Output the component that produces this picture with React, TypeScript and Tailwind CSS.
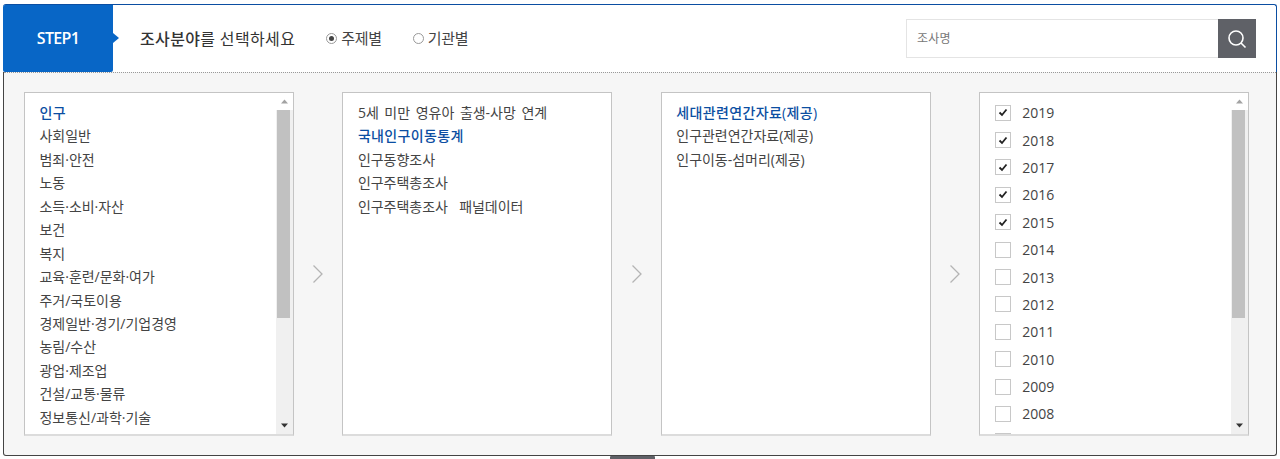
// App.tsx
const FONT = { fontFamily: '"Open Sans", "Noto Sans CJK KR", "Noto Sans", sans-serif' };

const subjects = [
  "인구",
  "사회일반",
  "범죄·안전",
  "노동",
  "소득·소비·자산",
  "보건",
  "복지",
  "교육·훈련/문화·여가",
  "주거/국토이용",
  "경제일반·경기/기업경영",
  "농림/수산",
  "광업·제조업",
  "건설/교통·물류",
  "정보통신/과학·기술",
];
const surveys = [
  "5세 미만 영유아 출생-사망 연계",
  "국내인구이동통계",
  "인구동향조사",
  "인구주택총조사",
  "인구주택총조사  패널데이터",
];
const details = ["세대관련연간자료(제공)", "인구관련연간자료(제공)", "인구이동-섬머리(제공)"];
const years = [2019, 2018, 2017, 2016, 2015, 2014, 2013, 2012, 2011, 2010, 2009, 2008, 2007];

function Scrollbar() {
  return (
    <div className="flex w-[17px] shrink-0 flex-col bg-[#f0f0f0]">
      <div className="flex h-[17px] shrink-0 items-center justify-center bg-white">
        <svg width="9" height="5" viewBox="0 0 9 5"><path d="M4.5 0.5 L8 4.5 L1 4.5 Z" fill="#a3a3a3" /></svg>
      </div>
      <div className="mx-[1px] h-[208px] w-[13px] bg-[#c1c1c1]" />
      <div className="flex-1" />
      <div className="flex h-[17px] shrink-0 items-center justify-center">
        <svg width="9" height="5" viewBox="0 0 9 5"><path d="M1 0.5 L8 0.5 L4.5 4.5 Z" fill="#333" /></svg>
      </div>
    </div>
  );
}

function Arrow() {
  return (
    <div className="flex w-[48.4px] shrink-0 items-center justify-center pt-[20px]">
      <svg width="14" height="20" viewBox="0 0 14 20" fill="none">
        <path d="M2.5 1.5 L11 10 L2.5 18.5" stroke="#b4b4b4" strokeWidth="1.3" />
      </svg>
    </div>
  );
}

function TextList({ items, active }: { items: string[]; active: string }) {
  return (
    <ul className="pl-[14.5px] pt-[8px]">
      {items.map((t) => (
        <li
          key={t}
          className={
            "h-[23.45px] whitespace-pre text-[14px] leading-[23.45px] [word-spacing:2px] " +
            (t === active ? "font-medium tracking-[0.35px] text-[#0b4ea2]" : "tracking-[-0.02px] text-[#444]")
          }
        >
          {t}
        </li>
      ))}
    </ul>
  );
}

function Box({ children, scroll }: { children: React.ReactNode; scroll?: boolean }) {
  return (
    <div className="flex h-[344px] w-[270px] shrink-0 overflow-hidden border border-b-2 border-[#c4c4c4] border-b-[#dcdcdc] bg-white">
      <div className="min-w-0 flex-1 overflow-hidden">{children}</div>
      {scroll && <Scrollbar />}
    </div>
  );
}

export default function App() {
  return (
    <div className="h-[459px] w-[1280px] overflow-hidden bg-white pl-[3px] pr-[3px] pt-[4px]" style={FONT}>
      <div className="w-[1274px]">
        {/* 상단 헤더 */}
        <div className="flex h-[68px] items-center rounded-t-[3px] border-r border-t border-[#0b4ea2] border-b-0 pr-[20px]">
          <div className="relative flex h-[67px] w-[110px] shrink-0 items-center justify-center rounded-b-[2px] rounded-tl-[2px] bg-[#0866c6] pb-[1px] text-[16px] font-semibold tracking-[-0.7px] text-white">
            STEP1
            <span className="absolute left-full top-[28px] h-0 w-0 border-y-[5px] border-l-[6px] border-y-transparent border-l-[#0866c6]" />
          </div>
          <div className="ml-[27px] text-[16px] tracking-[0.35px] text-[#333]">
            <span className="font-medium">조사분야</span>를 선택하세요
          </div>
          <label className="ml-[31px] flex items-center gap-[4px] text-[15px] tracking-[-0.3px] text-[#444]">
            <span className="flex h-[11px] w-[11px] items-center justify-center rounded-full border border-[#999]">
              <span className="h-[5px] w-[5px] rounded-full bg-[#444]" />
            </span>
            주제별
          </label>
          <label className="ml-[31px] flex items-center gap-[4px] text-[15px] tracking-[-0.3px] text-[#444]">
            <span className="h-[11px] w-[11px] rounded-full border border-[#999]" />
            기관별
          </label>
          <div className="ml-auto flex h-[39px] w-[350px]">
            <div className="flex flex-1 items-center border border-r-0 border-[#e4e4e4] pl-[10px] text-[12px] tracking-[0.2px] text-[#777]">
              조사명
            </div>
            <div className="flex w-[38px] items-center justify-center bg-[#5f6167]">
              <svg width="20" height="20" viewBox="0 0 20 20" fill="none" stroke="#fff" strokeWidth="1.6">
                <circle cx="9" cy="9" r="7" />
                <path d="M14 14 L18.5 18.5" />
              </svg>
            </div>
          </div>
        </div>

        {/* 선택 영역 */}
        <div className="h-[384px] rounded-b-[3px] border border-t-0 border-[#444] bg-[#f6f6f6]">
          <div className="h-[1px] border-t border-dotted border-[#999]" />
          <div className="flex pl-[20px] pt-[19px]">
            <Box scroll>
              <TextList items={subjects} active="인구" />
            </Box>
            <Arrow />
            <Box>
              <TextList items={surveys} active="국내인구이동통계" />
            </Box>
            <Arrow />
            <Box>
              <TextList items={details} active="세대관련연간자료(제공)" />
            </Box>
            <Arrow />
            <Box scroll>
              <ul className="pl-[15px] pt-[6px]">
                {years.map((y, i) => (
                  <li key={y} className="flex h-[27.4px] items-center gap-[11px] text-[14px] text-[#444]">
                    <span className="flex h-[16px] w-[16px] items-center justify-center border border-[#c8c8c8] bg-white">
                      {i < 5 && (
                        <svg width="10" height="9" viewBox="0 0 10 9" fill="none">
                          <path d="M1.5 4.5 L4 7 L8.5 1.5" stroke="#222" strokeWidth="1.8" />
                        </svg>
                      )}
                    </span>
                    {y}
                  </li>
                ))}
              </ul>
            </Box>
          </div>
        </div>

        {/* 하단 접기 탭 */}
        <div className="ml-[607px] h-[4px] w-[45px] rounded-t-[1px] bg-[#5f6167]" />
      </div>
    </div>
  );
}
